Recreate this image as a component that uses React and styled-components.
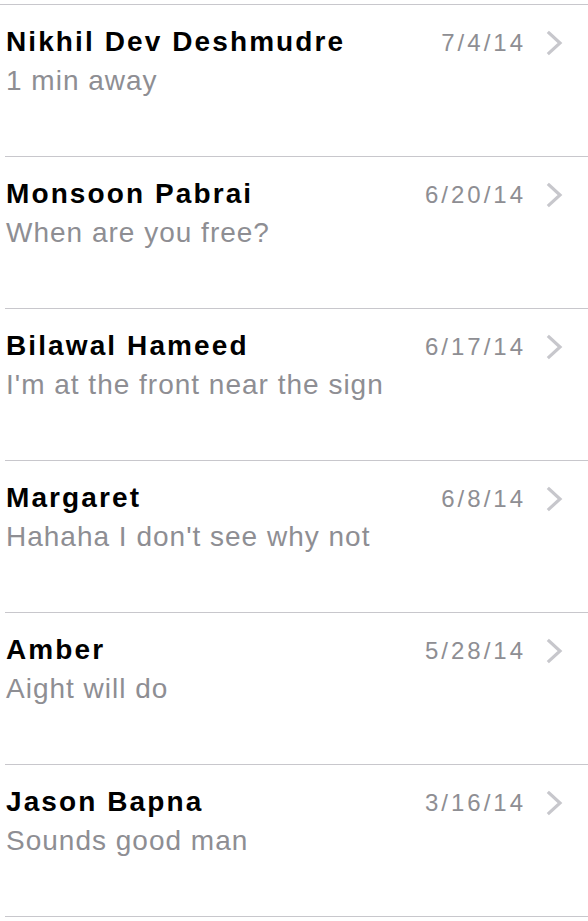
import styled, { createGlobalStyle } from "styled-components";

const GlobalStyle = createGlobalStyle`
  html, body {
    margin: 0;
    padding: 0;
    background: #ffffff;
  }
  body {
    font-family: "Liberation Sans", Arial, sans-serif;
  }
`;

const List = styled.ul`
  list-style: none;
  margin: 0;
  padding: 4px 0 0;
`;

const TopRule = styled.div`
  height: 1px;
  background: #c8c7cc;
`;

const Row = styled.li`
  display: flex;
  align-items: flex-start;
  height: 152px;
  margin-left: 5px;
  padding: 20px 0 0 1px;
  box-sizing: border-box;
  border-bottom: 1px solid #c8c7cc;
`;

const Body = styled.div`
  flex: 1;
  min-width: 0;
`;

const Name = styled.div`
  font-size: 28px;
  line-height: 34px;
  font-weight: 700;
  color: #000000;
  letter-spacing: 2.1px;
  white-space: nowrap;
`;

const Preview = styled.div`
  margin-top: 5px;
  font-size: 28px;
  line-height: 34px;
  color: #8e8e93;
  letter-spacing: 1px;
  white-space: nowrap;
`;

const Meta = styled.div`
  display: flex;
  align-items: center;
  gap: 20px;
  padding-top: 3px;
  margin-right: 25px;
`;

const Date = styled.span`
  font-size: 24px;
  line-height: 30px;
  color: #8e8e93;
  letter-spacing: 3px;
`;

const Chevron = () => (
  <svg width="17" height="26" viewBox="0 0 17 26">
    <polyline
      points="3,3 14,13 3,23"
      fill="none"
      stroke="#c7c7cc"
      strokeWidth="3.2"
      strokeLinecap="square"
    />
  </svg>
);

const threads = [
  { name: "Nikhil Dev Deshmudre", text: "1 min away", date: "7/4/14" },
  { name: "Monsoon Pabrai", text: "When are you free?", date: "6/20/14" },
  { name: "Bilawal Hameed", text: "I'm at the front near the sign", date: "6/17/14" },
  { name: "Margaret", text: "Hahaha I don't see why not", date: "6/8/14" },
  { name: "Amber", text: "Aight will do", date: "5/28/14" },
  { name: "Jason Bapna", text: "Sounds good man", date: "3/16/14" },
];

export default function App() {
  return (
    <>
      <GlobalStyle />
      <List>
        <TopRule />
        {threads.map((t) => (
          <Row key={t.name}>
            <Body>
              <Name>{t.name}</Name>
              <Preview>{t.text}</Preview>
            </Body>
            <Meta>
              <Date>{t.date}</Date>
              <Chevron />
            </Meta>
          </Row>
        ))}
      </List>
    </>
  );
}
